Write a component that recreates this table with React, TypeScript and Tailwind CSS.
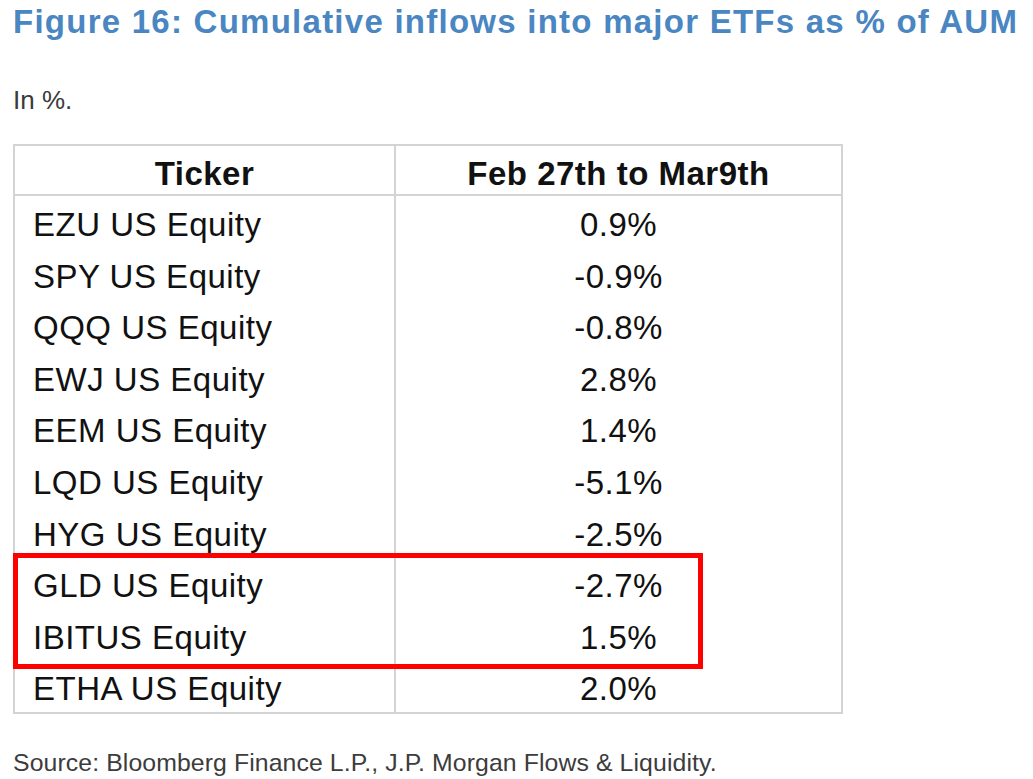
const rows: [string, string][] = [
  ['EZU US Equity', '0.9%'],
  ['SPY US Equity', '-0.9%'],
  ['QQQ US Equity', '-0.8%'],
  ['EWJ US Equity', '2.8%'],
  ['EEM US Equity', '1.4%'],
  ['LQD US Equity', '-5.1%'],
  ['HYG US Equity', '-2.5%'],
  ['GLD US Equity', '-2.7%'],
  ['IBITUS Equity', '1.5%'],
  ['ETHA US Equity', '2.0%'],
];

export default function App() {
  return (
    <div className="min-h-screen bg-white px-[13px] font-['Liberation_Sans',Arial,sans-serif]">
      {/* TITLE */}
      <h1 className="pt-[3px] text-[33px] font-bold leading-[38px] tracking-[1.25px] whitespace-nowrap text-[#4a86c1]">
        Figure 16: Cumulative inflows into major ETFs as % of AUM
      </h1>

      <p className="mt-[44px] text-[26px] leading-[30px] text-[#3a3a3a]">In %.</p>

      {/* TABLE */}
      <div className="relative mt-[29px] w-[830px] border-2 border-[#d4d4d4] text-[33px] tracking-[0.5px] text-[#111]">
        <div className="grid h-[50px] grid-cols-[381px_1fr] border-b-2 border-[#d4d4d4] font-bold">
          <div className="flex items-center justify-center border-r-2 border-[#d4d4d4] pt-[3px]">Ticker</div>
          <div className="flex items-center justify-center pt-[3px]">Feb 27th to Mar9th</div>
        </div>
        {rows.map(([ticker, value]) => (
          <div key={ticker} className="grid h-[51.6px] grid-cols-[381px_1fr]">
            <div className="flex items-center border-r-2 border-[#d4d4d4] pl-[18px] pt-[4px]">{ticker}</div>
            <div className="flex items-center justify-center pt-[4px]">{value}</div>
          </div>
        ))}

        {/* highlight box */}
        <div className="absolute left-[-2px] top-[407px] h-[116px] w-[690px] border-[5px] border-[#ff0000]" />
      </div>

      <p className="mt-[34px] text-[24.8px] leading-[30px] tracking-[0.1px] text-[#3c3c3c]">
        Source: Bloomberg Finance L.P., J.P. Morgan Flows &amp; Liquidity.
      </p>
    </div>
  );
}
